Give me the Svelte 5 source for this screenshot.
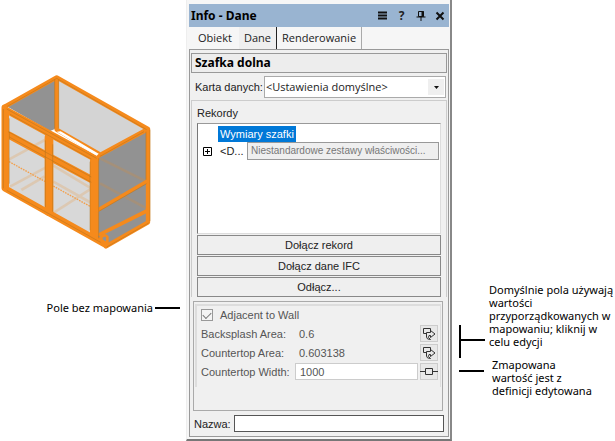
<script>
	let tab = 'Dane';
	let record = '';
	let adjacent = true;
	let width = '1000';
	let name = '';

	const tabs = ['Obiekt', 'Dane', 'Renderowanie'];
	const actions = ['Dołącz rekord', 'Dołącz dane IFC', 'Odłącz...'];
	const fields = [
		{ label: 'Backsplash Area:', value: '0.6' },
		{ label: 'Countertop Area:', value: '0.603138' }
	];
</script>

<main>
	<div class="left">
		<svg class="cabinet" viewBox="0 0 480 570" aria-label="Szafka dolna">
			<path fill="#d4d4d4" d="M170 38 444 192 292 270 170 198z" />
			<path fill="#929292" d="M170 38 20 124 150 198 170 190z" />
			<path fill="#929292" d="M292 276 444 192 444 472 318 544 292 520z" />
			<path fill="#d8d8d8" d="M14 128 292 276 292 526 14 370z" />
			<g fill="none" stroke="#ee8a20" stroke-opacity=".2" stroke-width="8">
				<path d="M22 286 140 222M30 365 170 290M64 375 134 334M160 302 290 380M160 350 285 420M158 445 275 370M300 280 440 350M300 355 440 430" />
			</g>
			<path fill="none" stroke="#f3a04d" stroke-width="4" stroke-dasharray="5 3" d="M20 286 292 436" />
			<g fill="none" stroke="#f58a1c" stroke-linejoin="round" stroke-linecap="round">
				<path stroke-width="13" d="M14 125 170 37 444 192 296 272M170 38V194L296 266M444 192V472L318 544" />
				<path stroke-width="19" d="M14 128V370L318 540" />
				<path stroke-width="20" d="M20 136 288 282" />
				<path stroke-width="22" d="M26 210 276 344" />
				<path stroke-width="26" d="M147 216V440M283 284V510" />
				<path stroke-width="14" d="M20 140V366" />
				<path stroke-width="11" d="M292 436 442 348M300 508 440 438" />
				<path stroke-width="8" d="M302 518Q314 505 322 516V540M304 530V518" />
			</g>
			<path fill="#fff" d="M170 200 182 199 296 266 290 272z" />
			<g fill="none" stroke="#a8701f" stroke-width="2" stroke-opacity=".65">
				<path d="M10 132V370M28 160V356M136 226V426M158 238V440M270 290V496M296 280V520M22 124 170 40 440 194M30 148 274 282M24 200 274 336M28 216 274 352M20 376 302 532M298 438 440 356M438 200V344M300 274 432 200M320 546 446 474" />
				<path d="M176 44V190M164 44V190M450 194V468M20 132 290 280" />
			</g>
		</svg>
		<div class="callout pole">
			<span>Pole bez mapowania</span>
			<svg width="25" height="2"><path d="M0 1H25" stroke="#000" stroke-width="2" /></svg>
		</div>
	</div>

	<section class="palette">
		<header>
			<h1>Info - Dane</h1>
			<button aria-label="Menu">
				<svg width="12" height="12"><path d="M1 2.5h9M1 5.5h9M1 8.5h9" stroke="#111" stroke-width="2" /></svg>
			</button>
			<button class="help" aria-label="Pomoc">?</button>
			<button aria-label="Przypnij">
				<svg width="12" height="12" fill="none" stroke="#111"><path d="M3.5 1.5h5v5h-5zM1.5 7h9M6 7v4" /><path d="M7.5 1v6" stroke-width="2" /></svg>
			</button>
			<button aria-label="Zamknij">
				<svg width="12" height="12"><path d="M2.5 2.5l7 7M9.5 2.5l-7 7" stroke="#111" stroke-width="2" /></svg>
			</button>
		</header>
		<nav>
			{#each tabs as item}
				<button class:active={tab === item} on:click={() => (tab = item)}>{item}</button>
			{/each}
		</nav>

		<div class="body">
			<h2>Szafka dolna</h2>
			<div class="card">
				<label for="card">Karta danych:</label>
				<div class="select">
					<select id="card">
						<option>&lt;Ustawienia domyślne&gt;</option>
					</select>
					<span class="arrow"><svg width="5" height="3"><path d="M0 0h5L2.5 3z" fill="#111" /></svg></span>
				</div>
			</div>

			<div class="records">
				<h3>Rekordy</h3>
				<div class="list">
					<button class="selected" on:click={() => (record = 'Wymiary szafki')}>Wymiary szafki</button>
					<div class="node">
						<button class="plus" aria-label="Rozwiń">
							<svg width="9" height="9"><path d="M.5 .5h8v8h-8zM2 4.5h5M4.5 2v5" fill="none" stroke="#000" /></svg>
						</button>
						<span>&lt;D...</span>
						<button class="sets">Niestandardowe zestawy właściwości...</button>
					</div>
				</div>
				{#each actions as action}
					<button class="action">{action}</button>
				{/each}
			</div>

			<div class="params">
				<div class="inner">
					<label class="check">
						<input type="checkbox" bind:checked={adjacent} />
						Adjacent to Wall
					</label>
					{#each fields as field}
						<div class="field">
							<span class="label">{field.label}</span>
							<span class="value">{field.value}</span>
							<button class="map" aria-label="Edytuj">
								<svg width="14" height="14" fill="none" stroke="#333">
									<path d="M4 6.5H1.5v-5h7v2.5M4.5 5.5h4V3.5L13 7l-4.5 3.5v-2H7M4.5 5.5V10q0 2.5 4 2.5l-2-2L7 8.5" />
								</svg>
							</button>
						</div>
					{/each}
					<div class="field">
						<label class="label" for="width">Countertop Width:</label>
						<input class="value" id="width" type="text" bind:value={width} />
						<button class="map" aria-label="Mapowanie">
							<svg width="18" height="9" fill="none" stroke="#333">
								<path d="M0 4.5h5M13 4.5h5M5.5 1.5h7v6h-7z" />
							</svg>
						</button>
					</div>
				</div>
			</div>

			<div class="name">
				<label for="name">Nazwa:</label>
				<input id="name" type="text" bind:value={name} />
			</div>
		</div>
	</section>

	<div class="right">
		<div class="callout">
			<svg width="26" height="76"><path d="M1 42V75M1 57H26" fill="none" stroke="#000" stroke-width="2" /></svg>
			<p>Domyślnie pola używają<br />wartości<br />przyporządkowanych w<br />mapowaniu; kliknij w<br />celu edycji</p>
		</div>
		<div class="callout second">
			<svg width="25" height="14"><path d="M0 13H25" stroke="#000" stroke-width="2" /></svg>
			<p>Zmapowana<br />wartość jest z<br />definicji edytowana</p>
		</div>
	</div>
</main>

<style>
	:global(body) {
		margin: 0;
		background: #fff;
	}
	main {
		display: grid;
		grid-template-columns: minmax(0, 186fr) minmax(0, 266fr) minmax(0, 163fr);
		font: 11px/14px 'Liberation Sans', Arial, sans-serif;
		color: #222;
	}
	main * {
		box-sizing: border-box;
	}
	button,
	input,
	select {
		font: inherit;
		color: inherit;
		margin: 0;
		padding: 0;
		border: 0;
		border-radius: 0;
		background: none;
		min-width: 0;
	}
	svg {
		display: block;
		flex: none;
	}
	h1,
	h2,
	h3,
	p {
		margin: 0;
	}
	.left {
		padding-top: 65px;
	}
	.cabinet {
		width: 160px;
		height: 190px;
	}
	.callout {
		display: flex;
		gap: 4px;
		font: 11px/13px 'Noto Sans', sans-serif;
		color: #000;
		white-space: nowrap;
	}
	.pole {
		align-items: center;
		justify-content: flex-end;
		gap: 2px;
		margin-top: 46px;
		padding-right: 6px;
	}
	.right {
		padding: 283px 0 0 7px;
	}
	.right .callout {
		height: 65px;
	}
	.right .second {
		height: 39px;
		margin-top: 10px;
		gap: 8px;
	}

	.palette {
		background: #f6f6f6;
		border-right: 2px solid #888;
		border-bottom: 2px solid #777;
		border-left: 1px solid #eee;
		padding: 4px 1px 2px 2px;
	}
	header {
		display: flex;
		align-items: center;
		height: 23px;
		padding: 0 0 0 2px;
		background: #99b4d1;
	}
	h1,
	h2 {
		flex: 1;
		font: bold 12px/18px 'Noto Sans', sans-serif;
		color: #000;
	}
	header button {
		display: flex;
		justify-content: center;
		width: 19px;
	}
	header .help {
		font: bold 12px/18px 'Noto Sans', sans-serif;
	}
	nav {
		display: flex;
		height: 22px;
	}
	nav button {
		padding: 0 5px;
		font: 11px/20px 'Open Sans', sans-serif;
		border-right: 1px solid #aaa;
	}
	nav button:first-child {
		padding-left: 9px;
		padding-right: 7px;
		border: 0;
	}
	nav .active {
		background: #efefef;
		border-color: #222;
	}
	.body {
		background: #f0f0f0;
		border: 1px solid #999;
		padding: 3px 1px 4px 1px;
	}
	h2 {
		padding: 0 3px;
		border: 1px solid #999;
		background: #ededed;
	}
	.card {
		display: flex;
		align-items: center;
		gap: 1px;
		padding: 3px 1px 2px 4px;
	}
	.select {
		flex: 1;
		display: grid;
		height: 22px;
		background: #fff;
		border: 1px solid #aaa;
	}
	select {
		grid-area: 1 / 1;
		appearance: none;
		padding: 0 1px;
		font: 11px/18px 'Open Sans', sans-serif;
	}
	.arrow {
		grid-area: 1 / 1;
		justify-self: end;
		display: flex;
		align-items: center;
		justify-content: center;
		width: 16px;
		margin: 2px 1px;
		background: #efefef;
		pointer-events: none;
	}
	.records {
		border: 1px solid #ccc;
		border-bottom: 0;
		padding: 5px 5px 0;
	}
	h3 {
		font-size: 11px;
		font-weight: normal;
		line-height: 14px;
		margin-bottom: 3px;
	}
	.list {
		height: 111px;
		padding: 2px 1px;
		background: #fff;
		border-top: 1px solid #999;
		border-left: 1px solid #777;
		border-right: 1px solid #ddd;
		border-bottom: 1px solid #ddd;
	}
	.selected {
		display: block;
		margin-left: 19px;
		padding: 0 2px;
		line-height: 16px;
		color: #fff;
		background: #0078d7;
	}
	.node {
		display: flex;
		align-items: center;
		margin-left: 4px;
	}
	.node span {
		width: 35px;
		padding-left: 8px;
	}
	.sets {
		flex: 1;
		height: 18px;
		white-space: nowrap;
		text-align: left;
		font-size: 10px;
		padding: 0 0 0 3px;
		color: #777;
		background: #efefef;
		border: 1px solid #999;
	}
	.action {
		display: block;
		width: 100%;
		height: 20px;
		margin-top: 1px;
		border: 1px solid #888;
		background: #efefef;
	}
	.params {
		min-height: 110px;
		margin: 4px 4px 4px 2px;
		padding: 2px 1px;
		border: 1px solid #aaa;
	}
	.inner {
		padding: 0 2px 6px 4px;
		border: solid #ddd;
		border-width: 2px 1px 0 2px;
		color: #555;
	}
	.check {
		display: flex;
		align-items: center;
		gap: 7px;
		height: 18px;
	}
	.check input {
		appearance: none;
		width: 12px;
		height: 12px;
		border: 1px solid #999;
		background: #f4f4f4;
	}
	.check input:checked::after {
		content: '';
		display: block;
		width: 7px;
		height: 4px;
		margin: 2px 1px;
		border: solid #777;
		border-width: 0 0 1px 1px;
		transform: rotate(-45deg);
	}
	.field {
		display: flex;
		align-items: center;
		height: 19px;
	}
	.label {
		width: 94px;
		white-space: nowrap;
	}
	.value {
		flex: 1;
		padding-left: 4px;
	}
	input.value {
		height: 17px;
		border: 1px solid #ccc;
		background: #fff;
	}
	.map {
		display: flex;
		align-items: center;
		justify-content: center;
		width: 18px;
		height: 17px;
		margin-left: 2px;
		border: 1px solid #ccc;
		background: #e8e8e8;
	}
	.name {
		display: flex;
		align-items: center;
		gap: 3px;
		padding: 0 3px;
	}
	.name input {
		flex: 1;
		height: 17px;
		border: 1px solid #555;
		background: #fff;
	}
</style>
